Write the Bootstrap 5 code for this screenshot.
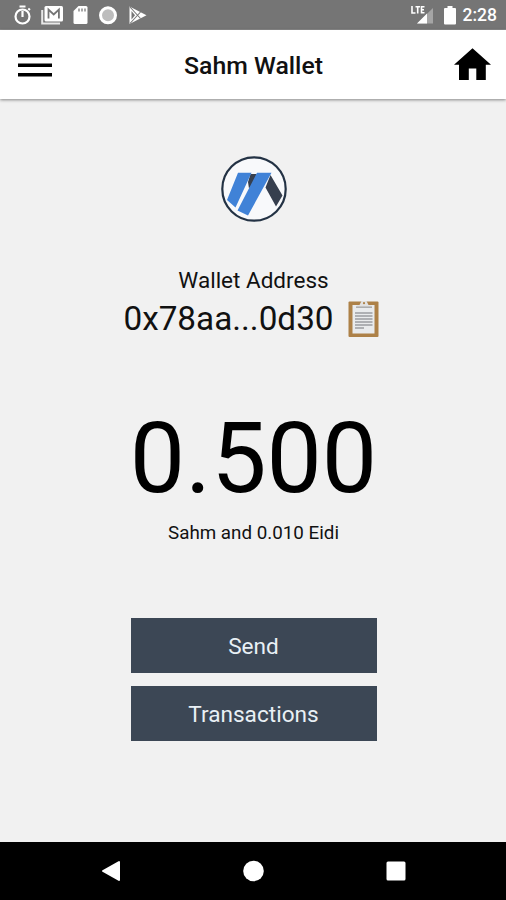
<!DOCTYPE html>
<html lang="en">
<head>
<meta charset="utf-8">
<meta name="viewport" content="width=device-width, initial-scale=1">
<title>Sahm Wallet</title>
<link href="https://cdn.jsdelivr.net/npm/bootstrap@5.3.0/dist/css/bootstrap.min.css" rel="stylesheet">
<style>
body{font-family:Roboto,"Liberation Sans",sans-serif;background:#f1f1f1;color:#111}
svg{display:block;flex:none}
.screen{height:900px;overflow:hidden}
.status-bar{height:30px;background:#757575;padding:0 9px 0 13px;border-bottom:1px solid #8b8b8b}
.status-left{gap:7px}
.clock{font-size:17.5px;font-weight:500;line-height:30px;margin-left:7px;padding-top:1px}
.battery{margin-left:10px}
.app-bar{height:69px;padding:0 15px 0 18px;box-shadow:0 1px 3px rgba(0,0,0,.45);z-index:1}
.app-title{font-size:24.8px;font-weight:500;line-height:30px;padding:2px 0 0 2px;color:#111}
.content{padding-left:1px}
.logo{margin-top:56px}
.addr-label{font-size:22.5px;line-height:30px;margin-top:42px}
.addr{font-size:33.3px;line-height:42px;margin-top:3px;padding-right:4px;gap:13px}
.balance{font-size:98.5px;line-height:110px;margin-top:64px;color:#000}
.sub-balance{font-size:18.8px;line-height:24px;margin-top:7px}
.actions{width:246px;gap:13px;margin-top:73px}
.btn-wallet{--bs-btn-color:#e9f0f5;--bs-btn-bg:#3c4755;--bs-btn-hover-bg:#33404c;--bs-btn-hover-color:#fff;--bs-btn-padding-x:0;--bs-btn-padding-y:0;height:55px;font-size:22.6px;line-height:32px}
.btn-wallet span{display:block;padding-top:2px}
.nav-keys{height:58px;background:#000;padding:0 100px 0 101px}
</style>
</head>
<body>
<div class="screen d-flex flex-column">
  <div class="status-bar d-flex align-items-center justify-content-between text-white">
    <div class="status-left d-flex align-items-center">
      <svg width="20" height="22" viewBox="0 0 20 22"><g fill="none" stroke="#fff" stroke-width="2.2"><circle cx="9.5" cy="12.500" r="7"/><path d="M6.500 2.500h6M9.500 7v6M15.500 6l1.300-1.500"/></g></svg>
      <svg width="24" height="22" viewBox="0 0 24 22"><path d="M2.200 6v13.500H20" fill="none" stroke="#e8e8e8" stroke-width="2"/><rect x="4.500" y="2" width="18.500" height="15.500" rx="1.500" fill="#fff"/><path d="M8.500 14.500V5.500l5.200 5 5.200-5v9" fill="none" stroke="#757575" stroke-width="1.800"/></svg>
      <svg width="19" height="22" viewBox="0 0 19 22"><path d="M7.500 2H15q1.500 0 1.500 1.500v15q0 1.500-1.500 1.500H4Q2.500 20 2.500 18.500V7z" fill="#fff"/><path d="M8 4.500v3M11 4.500v3M14 4.500v3" stroke="#8a8a8a" stroke-width="1.500"/></svg>
      <svg width="20" height="22" viewBox="0 0 20 22"><circle cx="11" cy="11.300" r="7.500" fill="#bdbdbd" stroke="#fff" stroke-width="3"/></svg>
      <svg width="24" height="22" viewBox="0 0 24 22"><path d="M5.500 2.500 22.500 11.300 5.500 20z" fill="#fff"/><path d="M6 3l10.500 11.500M6 19.500 16.500 8" stroke="#757575" stroke-width="1.100"/><path d="M7.500 7 11 11.200l-3.500 4.300z" fill="#757575"/></svg>
    </div>
    <div class="d-flex align-items-center">
      <svg width="24" height="22" viewBox="0 0 24 22"><path d="M23 4v15.500H7z" fill="#a5a5a5"/><path d="M17 9.500v10H7z" fill="#fff"/><path d="M2 2v7h3.500M5.500 2.800H10M7.700 2.800V9.500M14.500 2.800h-3v6h3M11.500 5.800h2.500" fill="none" stroke="#fff" stroke-width="1.600"/></svg>
      <svg class="battery" width="12" height="22" viewBox="0 0 12 22"><path d="M3.500 2h5v2H11q1 0 1 1v14.500q0 1-1 1H1q-1 0-1-1V5q0-1 1-1h2.500z" fill="#fff"/></svg>
      <span class="clock">2:28</span>
    </div>
  </div>
  <header class="app-bar navbar flex-nowrap bg-white position-relative">
    <svg width="34" height="24" viewBox="0 0 34 24"><path d="M0 2.700h34M0 12.200h34M0 21.700h34" stroke="#000" stroke-width="3.600"/></svg>
    <h1 class="app-title m-0">Sahm Wallet</h1>
    <svg width="38" height="34" viewBox="0 0 38 34"><path d="M19.500 .3 38 16.800h-5.200V32h-9.500V20.500h-7.500V32H6V16.800H1z" fill="#000"/></svg>
  </header>
  <main class="content flex-grow-1 d-flex flex-column align-items-center">
    <svg class="logo" width="68" height="68" viewBox="0 0 68 68"><circle cx="34" cy="34" r="31.700" fill="#f8f9fb" stroke="#233244" stroke-width="2.200"/><path d="M50.500 20 62.500 40.500 56 51.500 45.500 32.500zM30.500 19h6.200l-1.200 6-6.500 8.500-1-6.500z" fill="#363f4e"/><path d="M18 17.700H31.500L15.500 52.500 7 45zM37 17.700H51.500L28 60.500 17.500 55.500z" fill="#4082d7"/></svg>
    <div class="addr-label">Wallet Address</div>
    <div class="addr d-flex align-items-center"><span>0x78aa...0d30</span>
      <svg width="33" height="38" viewBox="0 0 33 38"><rect x="1.500" y="1.500" width="30" height="35.500" rx="1" fill="#ad8148"/><path d="M5.500 5h22v28.500h-22z" fill="#e9ebed"/><path d="M10 5h2.500l2-4h5l2 4H24l1 3H9z" fill="#e2e2e2"/><circle cx="17" cy="3.200" r="1.100" fill="#ad8148"/><path d="M9 7.200h16" stroke="#aaa" stroke-width="1.500"/><path d="M8 13h17.500M8 16h17.500M8 19h17.500M8 22h17.500M8 25h17.500M8 28h9" stroke="#9b9da1" stroke-width="1.400"/></svg>
    </div>
    <div class="balance">0.500</div>
    <div class="sub-balance">Sahm and 0.010 Eidi</div>
    <div class="actions d-grid">
      <button class="btn btn-wallet rounded-0 border-0" type="button"><span>Send</span></button>
      <button class="btn btn-wallet rounded-0 border-0" type="button"><span>Transactions</span></button>
    </div>
  </main>
  <footer class="nav-keys d-flex align-items-center justify-content-between">
    <svg width="20" height="22" viewBox="0 0 20 22"><path d="M18 2v18L2 11z" fill="#fff" stroke="#fff" stroke-width="2" stroke-linejoin="round"/></svg>
    <svg width="22" height="22" viewBox="0 0 22 22"><circle cx="10.500" cy="11" r="10.300" fill="#fff"/></svg>
    <svg width="20" height="20" viewBox="0 0 20 20"><rect x=".5" y=".5" width="19" height="19" rx="1.500" fill="#fff"/></svg>
  </footer>
</div>
<script src="https://cdn.jsdelivr.net/npm/bootstrap@5.3.0/dist/js/bootstrap.bundle.min.js"></script>
</body>
</html>
